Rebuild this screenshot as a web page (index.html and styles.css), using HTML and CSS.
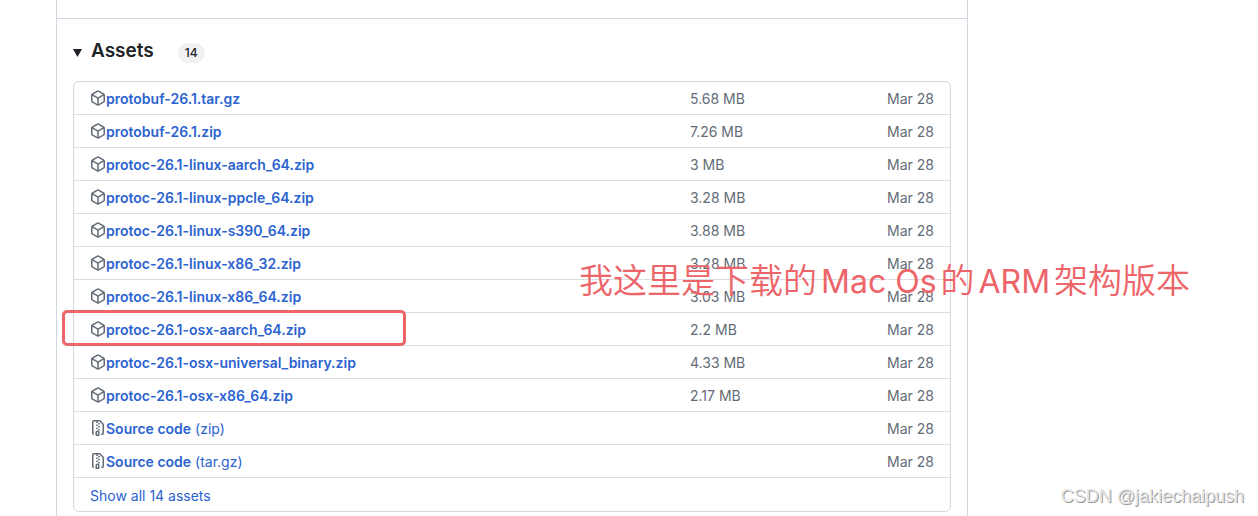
FILE: index.html
```html
<!DOCTYPE html>
<html lang="en">
<head>
  <meta charset="utf-8">
  <meta name="viewport" content="width=device-width, initial-scale=1">
  <title>Release assets</title>
  <link rel="stylesheet" href="styles.css">
</head>
<body>
  <svg class="sprite" aria-hidden="true">
    <symbol id="package" viewBox="0 0 16 16">
      <path d="m8.878.392 5.25 3.045c.54.314.872.89.872 1.514v6.098a1.75 1.75 0 0 1-.872 1.514l-5.25 3.045a1.75 1.75 0 0 1-1.756 0l-5.25-3.045A1.75 1.75 0 0 1 1 11.049V4.951c0-.624.332-1.201.872-1.514L7.122.392a1.75 1.75 0 0 1 1.756 0ZM7.875 1.69l-4.63 2.685L8 7.133l4.755-2.758-4.63-2.685a.248.248 0 0 0-.25 0ZM2.5 5.677v5.372c0 .09.047.171.125.216l4.625 2.683V8.432Zm6.25 8.271 4.625-2.683a.25.25 0 0 0 .125-.216V5.677L8.75 8.432Z"/>
    </symbol>
    <symbol id="file-zip" viewBox="0 0 16 16">
      <path d="M3.5 1.75v11.5c0 .09.048.173.126.217a.75.75 0 0 1-.752 1.298A1.748 1.748 0 0 1 2 13.25V1.75C2 .784 2.784 0 3.75 0h5.586c.464 0 .909.185 1.237.513l2.914 2.914c.329.328.513.773.513 1.237v8.586A1.75 1.75 0 0 1 12.25 15h-.5a.75.75 0 0 1 0-1.5h.5a.25.25 0 0 0 .25-.25V4.664a.25.25 0 0 0-.073-.177L9.513 1.573a.25.25 0 0 0-.177-.073H7.25a.75.75 0 0 1 0 1.5h-.5a.75.75 0 0 1 0-1.5h-3a.25.25 0 0 0-.25.25Zm3.75 8.75h.5c.966 0 1.75.784 1.75 1.75v3a.75.75 0 0 1-.75.75h-2.5a.75.75 0 0 1-.75-.75v-3c0-.966.784-1.75 1.75-1.75ZM6 5.25a.75.75 0 0 1 .75-.75h.5a.75.75 0 0 1 0 1.5h-.5A.75.75 0 0 1 6 5.25Zm.75 2.25h.5a.75.75 0 0 1 0 1.5h-.5a.75.75 0 0 1 0-1.5ZM8 6.75A.75.75 0 0 1 8.75 6h.5a.75.75 0 0 1 0 1.5h-.5A.75.75 0 0 1 8 6.75ZM8.75 3h.5a.75.75 0 0 1 0 1.5h-.5a.75.75 0 0 1 0-1.5ZM8 9.75A.75.75 0 0 1 8.75 9h.5a.75.75 0 0 1 0 1.5h-.5A.75.75 0 0 1 8 9.75Zm-1 2.5v2.25h1v-2.25a.25.25 0 0 0-.25-.25h-.5a.25.25 0 0 0-.25.25Z"/>
    </symbol>
  </svg>
  <main class="release">
    <div class="release-body"></div>
    <details class="assets" open>
      <summary>
        <svg class="caret" viewBox="0 0 9 8" aria-hidden="true"><path d="M0 0h9L4.500 8z"/></svg>
        <span class="title">Assets</span>
        <span class="counter">14</span>
      </summary>
      <table class="asset-list">
        <tbody>
          <tr>
            <td><a href="#"><svg class="icon"><use href="#package"/></svg><b>protobuf-26.1.tar.gz</b></a></td>
            <td class="size">5.68 MB</td>
            <td class="date">Mar 28</td>
          </tr>
          <tr>
            <td><a href="#"><svg class="icon"><use href="#package"/></svg><b>protobuf-26.1.zip</b></a></td>
            <td class="size">7.26 MB</td>
            <td class="date">Mar 28</td>
          </tr>
          <tr>
            <td><a href="#"><svg class="icon"><use href="#package"/></svg><b>protoc-26.1-linux-aarch_64.zip</b></a></td>
            <td class="size">3 MB</td>
            <td class="date">Mar 28</td>
          </tr>
          <tr>
            <td><a href="#"><svg class="icon"><use href="#package"/></svg><b>protoc-26.1-linux-ppcle_64.zip</b></a></td>
            <td class="size">3.28 MB</td>
            <td class="date">Mar 28</td>
          </tr>
          <tr>
            <td><a href="#"><svg class="icon"><use href="#package"/></svg><b>protoc-26.1-linux-s390_64.zip</b></a></td>
            <td class="size">3.88 MB</td>
            <td class="date">Mar 28</td>
          </tr>
          <tr>
            <td><a href="#"><svg class="icon"><use href="#package"/></svg><b>protoc-26.1-linux-x86_32.zip</b></a></td>
            <td class="size">3.28 MB</td>
            <td class="date">Mar 28</td>
          </tr>
          <tr>
            <td><a href="#"><svg class="icon"><use href="#package"/></svg><b>protoc-26.1-linux-x86_64.zip</b></a></td>
            <td class="size">3.03 MB</td>
            <td class="date">Mar 28</td>
          </tr>
          <tr>
            <td class="marked"><a href="#"><svg class="icon"><use href="#package"/></svg><b>protoc-26.1-osx-aarch_64.zip</b></a></td>
            <td class="size">2.2 MB</td>
            <td class="date">Mar 28</td>
          </tr>
          <tr>
            <td><a href="#"><svg class="icon"><use href="#package"/></svg><b>protoc-26.1-osx-universal_binary.zip</b></a></td>
            <td class="size">4.33 MB</td>
            <td class="date">Mar 28</td>
          </tr>
          <tr>
            <td><a href="#"><svg class="icon"><use href="#package"/></svg><b>protoc-26.1-osx-x86_64.zip</b></a></td>
            <td class="size">2.17 MB</td>
            <td class="date">Mar 28</td>
          </tr>
          <tr>
            <td><a href="#"><svg class="icon"><use href="#file-zip"/></svg><b>Source code</b>&nbsp;(zip)</a></td>
            <td class="size"></td>
            <td class="date">Mar 28</td>
          </tr>
          <tr>
            <td><a href="#"><svg class="icon"><use href="#file-zip"/></svg><b>Source code</b>&nbsp;(tar.gz)</a></td>
            <td class="size"></td>
            <td class="date">Mar 28</td>
          </tr>
          <tr>
            <td colspan="3"><button class="show-all" type="button">Show all 14 assets</button></td>
          </tr>
        </tbody>
      </table>
    </details>
  </main>
  <p class="note" lang="zh-CN">我这里是下载的<span class="latin">Mac Os</span>的<span class="latin">ARM</span>架构版本</p>
  <p class="watermark">CSDN @jakiechaipush</p>
</body>
</html>
```
FILE: styles.css
```css
* {
  box-sizing: border-box;
}

body {
  position: relative;
  min-height: 100vh;
  margin: 0;
  font-family: Inter, "Noto Sans CJK SC", sans-serif;
  font-size: 14px;
  line-height: 20px;
  color: #1f2328;
  background-color: white;
}

.sprite {
  display: none;
}

.release {
  max-width: 912px;
  min-height: 100vh;
  margin-left: 56px;
  border: 1px solid #d0d7de;
  border-width: 0 1px;
}

.release-body {
  height: 19px;
  border-bottom: 1px solid #d0d7de;
}

.assets {
  padding: 18px 16px 4px;
}

summary {
  display: flex;
  align-items: center;
  height: 28px;
  margin-bottom: 16px;
  list-style: none;
  cursor: pointer;
}

.caret {
  width: 9px;
  height: 8px;
  margin-right: 9px;
  margin-top: 4px;
  fill: #1f2328;
}

.title {
  font-size: 19px;
  font-weight: 600;
}

.counter {
  margin: 4px 0 0 24px;
  padding: 0 7px;
  font-size: 12px;
  font-weight: 500;
  border-radius: 10px;
  background-color: #eff1f3;
}

.asset-list {
  width: 100%;
  border: 1px solid #d0d7de;
  border-radius: 6px;
  border-spacing: 0;
}

td {
  height: 33px;
  padding: 2px 16px 0;
  border-bottom: 1px solid #d8dee4;
}

tr:last-child td {
  border-bottom: 0;
}

a {
  display: flex;
  align-items: center;
  color: #2b63d0;
  text-decoration: none;
}

b {
  font-weight: 600;
}

.icon {
  width: 16px;
  height: 16px;
  margin-bottom: 2px;
  fill: #636c76;
}

.size,
.date {
  color: #636c76;
}

.size {
  width: 150px;
  padding: 2px 0 0;
}

.date {
  width: 110px;
  text-align: right;
}

.show-all {
  display: block;
  padding: 0;
  font: inherit;
  color: #2b63d0;
  border: 0;
  background: none;
  cursor: pointer;
}

/* red marks over the list */
.marked {
  position: relative;
}

.marked::after {
  content: "";
  position: absolute;
  top: -3px;
  left: -12px;
  box-sizing: border-box;
  width: 344px;
  height: 36px;
  border: 3px solid #ed6469;
  border-radius: 5px;
}

.note {
  position: absolute;
  top: 255px;
  left: 579px;
  margin: 0;
  font-family: "Noto Sans CJK SC", sans-serif;
  font-size: 34px;
  font-weight: 350;
  line-height: 48px;
  color: #ed6469;
  white-space: nowrap;
}

.latin {
  margin: 0 4px;
  font-family: Inter, sans-serif;
  font-size: 32px;
  font-weight: 400;
}

.watermark {
  position: absolute;
  right: 14px;
  bottom: 10px;
  margin: 0;
  font-family: "Liberation Sans", sans-serif;
  font-size: 18px;
  color: #e6e6e6;
  text-shadow: 1px 1px 0 #999;
}
```
